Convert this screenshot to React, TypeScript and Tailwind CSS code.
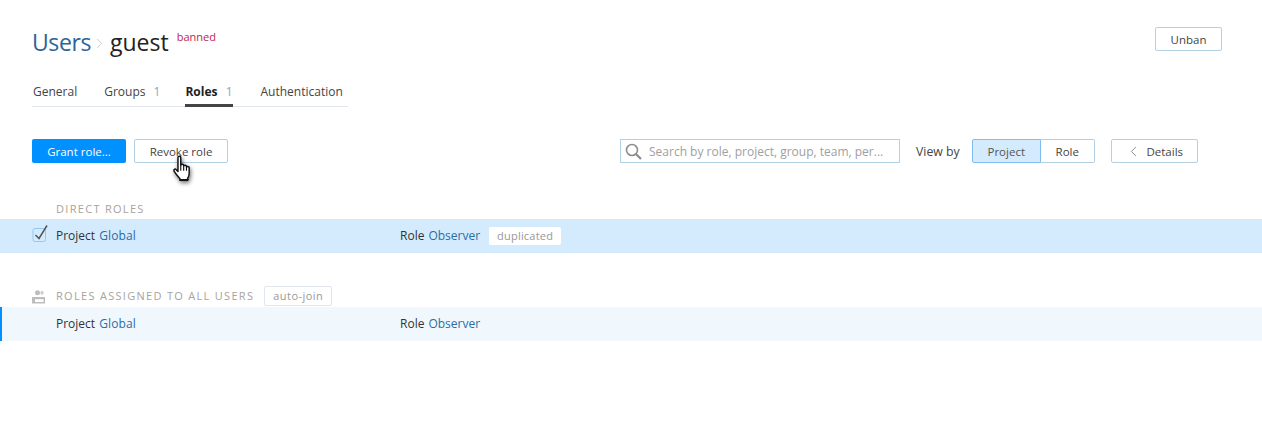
import { ChevronLeft, ChevronRight } from "lucide-react";

const font = "font-['Open_Sans','Noto_Sans',sans-serif]";

function OutlineButton({ children, className = "" }: { children: React.ReactNode; className?: string }) {
  return (
    <button className={`h-6 pt-[1px] rounded-[2px] border border-[#b5cfe3] bg-white text-[11.5px] text-[#444] flex items-center justify-center ${className}`}>
      {children}
    </button>
  );
}

function HandCursor() {
  return (
    <svg width="26" height="28" viewBox="0 0 22 25" className="absolute left-[170px] top-[155px] drop-shadow-[1px_2px_2px_rgba(0,0,0,0.55)]">
      <path
        d="M6.500 2.200c0-1.500 2.500-1.500 2.500 0v7c.2-1.300 2.500-1.300 2.600 0v.8c.2-1.200 2.400-1.200 2.500.1v.8c.3-1 2.300-.9 2.400.3v5.600c0 2-.6 3-1.400 4.200v1.500H8.200v-1.500C6.600 19 4.800 17.500 3 14.500c-.8-1.500.9-2.500 2-1.400l1.500 1.700z"
        fill="#fff"
        stroke="#111"
        strokeWidth="1.300"
        strokeLinejoin="round"
      />
      <path d="M9 9.500v4.500M11.600 10.200v3.800M14.100 11v3M8.500 22h7.600" stroke="#111" strokeWidth="1" fill="none" />
    </svg>
  );
}

function RoleRow({ badge, className = "", left }: { badge?: string; className?: string; left?: React.ReactNode }) {
  return (
    <div className={`relative h-[34px] flex items-center text-[12px] text-[#333] ${className}`}>
      {left}
      <div className="w-[344px] pl-[56px] box-content shrink-0">
        Project <span className="ml-[1px] tracking-[0.1px] text-[#2b6ca3]">Global</span>
      </div>
      <div className="flex items-center">
        Role <span className="ml-1 text-[#2b6ca3]">Observer</span>
        {badge && (
          <span className="ml-[9px] h-[18px] px-2 flex items-center rounded-[2px] bg-white text-[11px] text-[#999] tracking-[0.2px]">
            {badge}
          </span>
        )}
      </div>
    </div>
  );
}

export default function App() {
  return (
    <div className={`relative h-[440px] w-[1262px] overflow-hidden bg-white ${font}`}>
      <div className="px-8 pt-[24px]">
        <div className="flex items-start justify-between pr-[8px]">
          <div className="flex items-start h-[36px]">
            <span className="text-[23px] leading-[36px] tracking-[-0.4px] text-[#2c6497]">Users</span>
            <ChevronRight size={17} strokeWidth={1.3} className="mr-[2px] mt-[11px] text-[#c8c8c8]" />
            <span className="text-[23px] leading-[36px] text-[#222]">guest</span>
            <span className="ml-[8px] text-[11px] leading-[18px] mt-[4px] text-[#c4244f]">banned</span>
          </div>
          <OutlineButton className="w-[67px] mt-[3px]">Unban</OutlineButton>
        </div>

        <div className="mt-[11px] flex h-[36px] w-[316px] border-b border-[#e2e6ee] text-[12px] text-[#444]">
          <div className="ml-[1px] pt-[12px]">General</div>
          <div className="ml-[27px] pt-[12px]">
            Groups <span className="ml-[5px] text-[#8fa5b8]">1</span>
          </div>
          <div className="relative ml-[25px] pt-[12px] font-bold text-[#222]">
            Roles <span className="ml-[5px] font-normal text-[#8fa5b8]">1</span>
            <div className="absolute left-0 right-0 top-[33px] h-[3px] bg-[#444]" />
          </div>
          <div className="ml-[28px] pt-[12px]">Authentication</div>
        </div>

        <div className="mt-[32px] flex items-center">
          <button className="h-6 w-[94px] pt-[1px] rounded-[2px] bg-[#0090ff] text-[11.5px] text-white">Grant role...</button>
          <OutlineButton className="ml-[8px] w-[94px]">Revoke role</OutlineButton>
          <div className="ml-[392px] flex h-6 w-[280px] items-center border border-[#b5cfe3] bg-white">
            <svg width="19" height="19" viewBox="0 0 19 19" className="ml-[3px] shrink-0" fill="none" stroke="#8c8c8c">
              <circle cx="8" cy="8" r="5.500" strokeWidth="1.600" />
              <path d="M12 12l5 5" strokeWidth="2.200" />
            </svg>
            <span className="ml-[6px] pt-[2px] text-[12px] text-[#a0a0a0]">Search by role, project, group, team, per...</span>
          </div>
          <span className="ml-[16px] pt-[2px] text-[12.3px] text-[#444]">View by</span>
          <div className="ml-[12px] flex h-6">
            <div className="flex w-[69px] pt-[1px] items-center justify-center rounded-l-[2px] border border-[#7fbdf0] bg-[#d4ebfd] text-[11.5px] text-[#555]">
              Project
            </div>
            <div className="flex w-[54px] pt-[1px] items-center justify-center rounded-r-[2px] border border-l-0 border-[#b5cfe3] text-[11.5px] text-[#444]">
              Role
            </div>
          </div>
          <OutlineButton className="ml-[16px] w-[87px]">
            <ChevronLeft size={17} strokeWidth={1.2} className="mr-[4px] -mt-[1px] text-[#777]" />
            Details
          </OutlineButton>
        </div>
      </div>

      <div className="mt-[37px] pl-[56px] text-[11px] leading-[18px] tracking-[1.3px] text-[#a8a29c]">DIRECT ROLES</div>
      <RoleRow
        badge="duplicated"
        className="mt-[1px] bg-[#d4ebfd]"
        left={
          <svg width="18" height="20" viewBox="0 0 18 20" className="absolute left-[32px] top-[4px]">
            <rect x="1" y="5.500" width="12.500" height="13" rx="2" fill="none" stroke="#8fc9f5" />
            <path d="M3.500 12l3.500 3.500 8-13" fill="none" stroke="#555" strokeWidth="1.500" />
          </svg>
        }
      />

      <div className="mt-[33px] flex h-[20px] items-center pl-[32px]">
        <svg width="14" height="14" viewBox="0 0 14 14" className="mt-[2px] shrink-0" fill="#bdbdbd">
          <circle cx="5.500" cy="2.700" r="2.500" />
          <rect x="8.500" y="0.700" width="3" height="4" rx="1.500" fill="#d0d0d0" />
          <path d="M0 7h13v6.500H0zM3 9.300v2.700h8.500V9.300z" fillRule="evenodd" />
        </svg>
        <span className="ml-[10px] text-[11px] tracking-[1.3px] text-[#a8a29c]">ROLES ASSIGNED TO ALL USERS</span>
        <span className="ml-[10px] flex h-[20px] items-center rounded-[2px] border border-[#e2e6ee] px-2 text-[11px] tracking-[0.45px] text-[#999]">
          auto-join
        </span>
      </div>
      <RoleRow className="mt-[1px] bg-[#f0f8fe] shadow-[inset_2px_0_0_#0090ff]" />

      <HandCursor />
    </div>
  );
}
